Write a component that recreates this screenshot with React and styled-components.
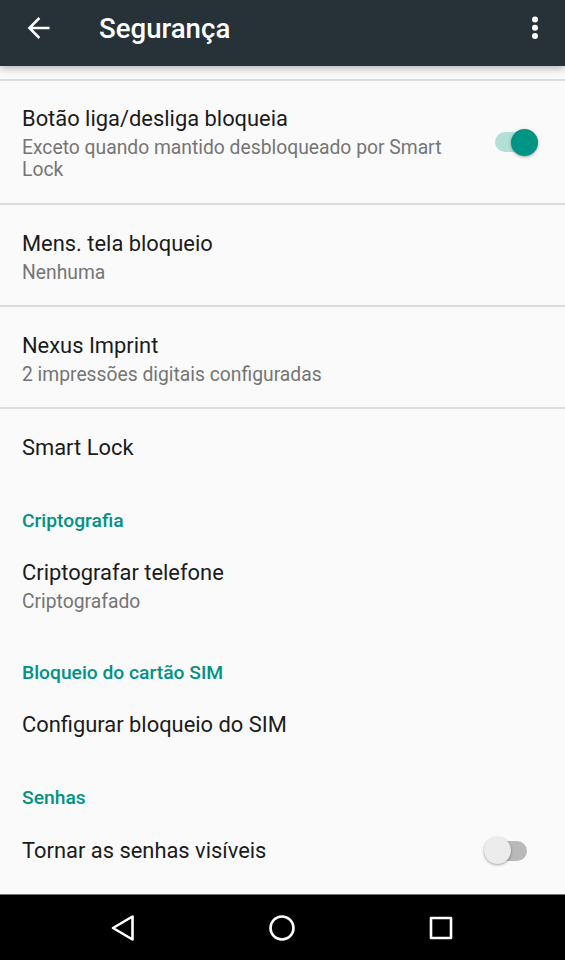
import React from 'react';
import styled, { createGlobalStyle } from 'styled-components';

const GlobalStyle = createGlobalStyle`
  * {
    box-sizing: border-box;
  }

  body {
    margin: 0;
    background: #fafafa;
    font-family: Roboto, sans-serif;
  }
`;

const Screen = styled.div`
  display: flex;
  flex-direction: column;
  width: 565px;
  height: 960px;
  overflow: hidden;
  background: #fafafa;
`;

const AppBar = styled.header`
  display: flex;
  align-items: center;
  flex: none;
  height: 66px;
  padding: 0 18px 9px 22px;
  background: #263238;
  color: #fff;
  box-shadow: 0 2px 8px rgba(0, 0, 0, 0.3);
`;

const Title = styled.h1`
  flex: 1;
  margin: 0 0 0 43px;
  font-size: 27.6px;
  font-weight: 500;
  line-height: 36px;
`;

const IconButton = styled.button`
  display: flex;
  padding: 0;
  border: none;
  background: transparent;
  color: inherit;
  cursor: pointer;
`;

const List = styled.main`
  flex: 1;
  padding-top: 13px;
`;

const Row = styled.div`
  display: flex;
  align-items: center;
  justify-content: space-between;
  height: ${(props) => props.$height}px;
  padding: 0 ${(props) => props.$right || 27}px 0 22px;
  border-top: ${(props) => (props.$divider ? '2px solid #dadbdb' : 'none')};
`;

const RowText = styled.div`
  align-self: flex-start;
  width: 440px;
  padding-top: ${(props) => props.$top || 24}px;
`;

const RowTitle = styled.div`
  color: #1b1b1b;
  font-size: 21.9px;
  line-height: 28px;
`;

const Summary = styled.div`
  margin-top: 4px;
  color: #757575;
  font-size: 19.3px;
  line-height: 22px;
`;

const Category = styled.h2`
  height: 49px;
  margin: 0;
  padding: 24px 22px 0;
  color: #009283;
  font-size: 19.25px;
  font-weight: 500;
  line-height: 22px;
`;

const Track = styled.button`
  display: flex;
  align-items: center;
  justify-content: ${(props) => (props.$on ? 'flex-end' : 'flex-start')};
  width: 43px;
  height: 20px;
  padding: 0;
  border: none;
  border-radius: 10px;
  background: ${(props) => (props.$on ? '#b2dfd6' : '#b9b9b9')};
  cursor: pointer;
`;

const Thumb = styled.span`
  flex: none;
  width: 27px;
  height: 27px;
  border-radius: 50%;
  background: ${(props) => (props.$on ? '#009485' : '#ececec')};
  box-shadow: 0 1px 3px rgba(0, 0, 0, 0.35);
`;

const NavBar = styled.nav`
  display: flex;
  align-items: center;
  justify-content: center;
  gap: 129px;
  flex: none;
  height: 66px;
  padding-right: 1px;
  border-top: 1px solid #777;
  background: #000;
`;

const Switch = ({ on, onChange }) => (
  <Track $on={on} role="switch" aria-checked={on} onClick={() => onChange(!on)}>
    <Thumb $on={on} />
  </Track>
);

const App = () => {
  const [powerLocks, setPowerLocks] = React.useState(true);
  const [showPasswords, setShowPasswords] = React.useState(false);

  return (
    <>
      <GlobalStyle />
      <Screen>
        <AppBar>
          <IconButton>
            <svg width="34" height="34" viewBox="0 0 34 34" fill="none" stroke="#fff" strokeWidth="2.5">
              <path d="M27.5 16H8M17.4 6L7.4 16l10 10" />
            </svg>
          </IconButton>
          <Title>Segurança</Title>
          <IconButton>
            <svg width="24" height="34" viewBox="0 0 24 34" fill="#fff">
              <circle cx="12" cy="7.6" r="3" />
              <circle cx="12" cy="15.8" r="3" />
              <circle cx="12" cy="24" r="3" />
            </svg>
          </IconButton>
        </AppBar>

        <List>
          <Row $height={124} $divider>
            <RowText>
              <RowTitle>Botão liga/desliga bloqueia</RowTitle>
              <Summary>Exceto quando mantido desbloqueado por Smart Lock</Summary>
            </RowText>
            <Switch on={powerLocks} onChange={setPowerLocks} />
          </Row>
          <Row $height={102} $divider>
            <RowText $top={25}>
              <RowTitle>Mens. tela bloqueio</RowTitle>
              <Summary>Nenhuma</Summary>
            </RowText>
          </Row>
          <Row $height={102} $divider>
            <RowText $top={25}>
              <RowTitle>Nexus Imprint</RowTitle>
              <Summary>2 impressões digitais configuradas</Summary>
            </RowText>
          </Row>
          <Row $height={79} $divider>
            <RowTitle>Smart Lock</RowTitle>
          </Row>

          <Category>Criptografia</Category>
          <Row $height={103}>
            <RowText>
              <RowTitle>Criptografar telefone</RowTitle>
              <Summary>Criptografado</Summary>
            </RowText>
          </Row>

          <Category>Bloqueio do cartão SIM</Category>
          <Row $height={76}>
            <RowTitle>Configurar bloqueio do SIM</RowTitle>
          </Row>

          <Category>Senhas</Category>
          <Row $height={77} $right={38}>
            <RowTitle>Tornar as senhas visíveis</RowTitle>
            <Switch on={showPasswords} onChange={setShowPasswords} />
          </Row>
        </List>

        <NavBar>
          <IconButton>
            <svg width="30" height="30" viewBox="0 0 30 30" fill="none" stroke="#fff" strokeWidth="2.6" strokeLinejoin="round">
              <path d="M24.5 3.5v23L5 15z" />
            </svg>
          </IconButton>
          <IconButton>
            <svg width="30" height="30" viewBox="0 0 30 30" fill="none" stroke="#fff" strokeWidth="2.6">
              <circle cx="15" cy="15" r="11.5" />
            </svg>
          </IconButton>
          <IconButton>
            <svg width="30" height="30" viewBox="0 0 30 30" fill="none" stroke="#fff" strokeWidth="2.6" strokeLinejoin="round">
              <rect x="5" y="5" width="20" height="20" />
            </svg>
          </IconButton>
        </NavBar>
      </Screen>
    </>
  );
};

export default App;
